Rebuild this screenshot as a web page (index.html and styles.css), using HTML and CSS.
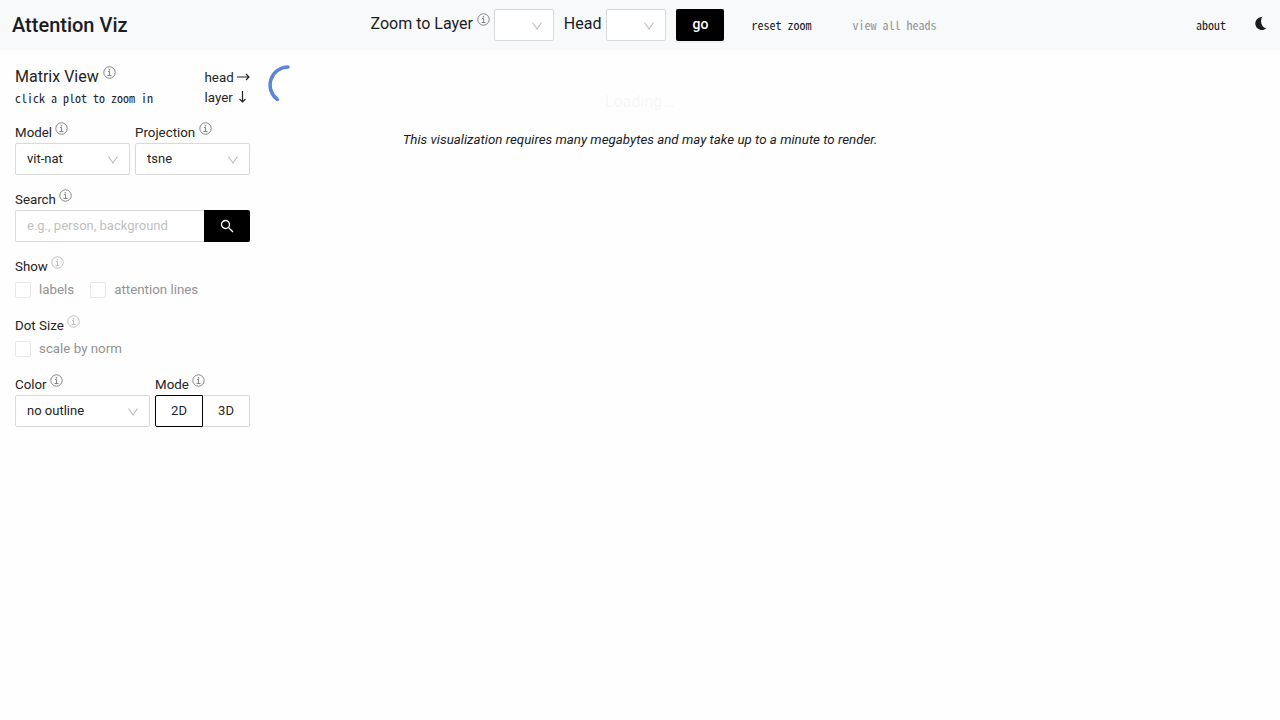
FILE: index.html
```
<!DOCTYPE html>
<html lang="en">
<head>
<meta charset="utf-8">
<title>Attention Viz</title>
<link rel="stylesheet" href="styles.css">
</head>
<body>
<svg class="sprite" aria-hidden="true">
  <symbol id="info" viewBox="0 0 13 13"><g fill="none" stroke="currentColor" stroke-width=".9"><circle cx="6.5" cy="6.5" r="5.700"/><path d="M5 5.500h1.500v4M4.500 9.500h4"/></g><circle cx="6.4" cy="3.7" r=".8" fill="currentColor"/></symbol>
  <symbol id="down" viewBox="0 0 12 12"><path d="M1.5 2.5 6 9l4.500-6.500" fill="none" stroke="currentColor" stroke-width="1.200"/></symbol>
</svg>
<header class="topbar">
  <h1 class="brand">Attention Viz</h1>
  <div class="zoom">
    <label class="zoom-label" for="layer">Zoom to Layer <svg class="info"><use href="#info"/></svg></label>
    <span class="select small"><select id="layer"><option></option></select><svg><use href="#down"/></svg></span>
    <label class="zoom-label head-label" for="head">Head</label>
    <span class="select small"><select id="head"><option></option></select><svg><use href="#down"/></svg></span>
    <button class="go">go</button>
    <button class="text-button pixel">reset zoom</button>
    <button class="text-button pixel" disabled>view all heads</button>
  </div>
  <nav class="links">
    <a class="pixel" href="#about">about</a>
    <button class="theme" aria-label="Dark mode"><svg viewBox="0 0 14 16"><path d="M8 2A6.500 6.500 0 1 0 12.500 13C8.500 13.500 5.500 7 8 2Z" fill="currentColor"/></svg></button>
  </nav>
</header>
<div class="page">
  <aside class="sidebar">
    <div class="intro">
      <div>
        <h2 class="view-title">Matrix View <svg class="info"><use href="#info"/></svg></h2>
        <p class="pixel">click a plot to zoom in</p>
      </div>
      <div class="axes">
        <div>head <svg viewBox="0 0 13 12"><path d="M0 6h12M9 3l3 3-3 3" fill="none" stroke="currentColor" stroke-width="1.200"/></svg></div>
        <div>layer <svg viewBox="0 0 13 12"><path d="M6.500 0v11M3.500 8l3 3 3-3" fill="none" stroke="currentColor" stroke-width="1.200"/></svg></div>
      </div>
    </div>
    <div class="row">
      <div class="field">
        <label class="label" for="model">Model <svg class="info"><use href="#info"/></svg></label>
        <span class="select"><select id="model"><option>vit-nat</option></select><svg><use href="#down"/></svg></span>
      </div>
      <div class="field">
        <label class="label" for="projection">Projection <svg class="info"><use href="#info"/></svg></label>
        <span class="select"><select id="projection"><option>tsne</option></select><svg><use href="#down"/></svg></span>
      </div>
    </div>
    <div>
      <label class="label" for="search">Search <svg class="info"><use href="#info"/></svg></label>
      <div class="search">
        <input id="search" type="text" placeholder="e.g., person, background">
        <button aria-label="Search"><svg viewBox="0 0 14 14"><g fill="none" stroke="currentColor" stroke-width="1.300"><circle cx="5.500" cy="5.500" r="4"/><path d="m8.400 8.400 4.600 4.600"/></g></svg></button>
      </div>
    </div>
    <div>
      <div class="label">Show <svg class="info muted"><use href="#info"/></svg></div>
      <div class="checks">
        <label><input type="checkbox" disabled>labels</label>
        <label><input type="checkbox" disabled>attention lines</label>
      </div>
    </div>
    <div>
      <div class="label">Dot Size <svg class="info muted"><use href="#info"/></svg></div>
      <div class="checks">
        <label><input type="checkbox" disabled>scale by norm</label>
      </div>
    </div>
    <div class="row">
      <div class="field">
        <label class="label" for="color">Color <svg class="info"><use href="#info"/></svg></label>
        <span class="select"><select id="color"><option>no outline</option></select><svg><use href="#down"/></svg></span>
      </div>
      <div class="mode">
        <div class="label">Mode <svg class="info"><use href="#info"/></svg></div>
        <div class="modes">
          <label><input type="radio" name="mode" checked>2D</label>
          <label><input type="radio" name="mode">3D</label>
        </div>
      </div>
    </div>
  </aside>
  <main class="plot">
    <svg class="spinner" viewBox="0 0 40 40" aria-hidden="true"><path d="M20 2A18 18 0 0 0 9.300 34.400" fill="none" stroke="#5b85d6" stroke-width="3.500" stroke-linecap="round"/></svg>
  </main>
  <div class="loading" role="status">
    <p class="loading-title">Loading...</p>
    <p class="loading-note">This visualization requires many megabytes and may take up to a minute to render.</p>
  </div>
</div>
</body>
</html>
```
FILE: styles.css
```
* { box-sizing: border-box; }
body { margin: 0; background: #fefefe; color: #1b1c1f; font: 16px/22px Roboto, sans-serif; }
h1, h2, p { margin: 0; font-weight: 400; }
button, input, select { margin: 0; font: inherit; color: inherit; }
button { border: 0; padding: 0; background: none; cursor: pointer; }
svg { flex: none; }
.sprite { position: absolute; width: 0; height: 0; }
.pixel { font: 12px/20px "Noto Sans Mono CJK SC", "Noto Sans Mono CJK JP", monospace; }

.topbar { display: grid; grid-template-columns: 1fr auto 1fr; align-items: center; height: 50px; padding: 0 12px; background: #f7f9fb; }
.brand { font-size: 20px; font-weight: 500; }
.zoom { display: flex; align-items: center; padding-left: 42px; }
.zoom-label { margin-right: 4px; padding-bottom: 3px; }
.head-label { margin: 0 5px 0 10px; }
.go { width: 48px; height: 32px; margin: 0 12px 0 10px; padding-bottom: 2px; border-radius: 2px; background: #000; color: #fff; font-size: 14px; font-weight: 500; box-shadow: 0 2px 0 #eff0f2; }
.text-button { padding: 0 15px; margin-right: 11px; }
.text-button:last-child { margin-right: 0; }
.text-button:disabled { color: #929396; }
.links { display: flex; align-items: center; justify-content: flex-end; gap: 28px; }
.links a { color: inherit; text-decoration: none; }
.theme { display: flex; padding-bottom: 4px; }
.theme svg { width: 14px; height: 16px; }

.info { width: 13px; height: 13px; color: #77787a; vertical-align: 2px; }
.zoom-label .info { vertical-align: 3px; }
.muted { color: #b7b8b9; }
.select { position: relative; display: block; }
.select.small { width: 60px; }
.select select { display: block; width: 100%; height: 32px; padding: 0 30px 0 11px; border: 1px solid #d9d9d9; border-radius: 2px; background: #fff; font-size: 13px; appearance: none; }
.select svg { position: absolute; right: 11px; top: 11px; width: 12px; height: 12px; color: #bfbfbf; pointer-events: none; }

.page { position: relative; display: flex; }
.sidebar { display: flex; flex-direction: column; gap: 13px; width: 265px; padding: 15px; color: #242424; }
.intro { display: flex; justify-content: space-between; height: 43px; }
.view-title { font-size: 16px; line-height: 24px; height: 23px; }
.view-title .info { vertical-align: 3px; }
.axes { padding-top: 3px; font-size: smaller; line-height: 20px; }
.axes svg { width: 13px; height: 12px; vertical-align: -1px; }
.row { display: flex; gap: 5px; }
.field { flex: 1; }
.label { display: block; height: 22px; font-size: smaller; line-height: 24px; white-space: nowrap; }
.search { display: flex; }
.search input { flex: 1; min-width: 0; height: 32px; padding: 0 11px 2px; border: 1px solid #d9d9d9; border-right: 0; border-radius: 2px 0 0 2px; background: #fff; font-size: 13px; }
.search input::placeholder { color: #bfbfbf; opacity: 1; }
.search button { display: flex; align-items: center; justify-content: center; width: 46px; height: 32px; border-radius: 0 2px 2px 0; background: #000; color: #fff; }
.search svg { width: 14px; height: 14px; }
.checks { display: flex; gap: 16px; height: 24px; padding-top: 2px; font-size: smaller; color: #929292; }
.checks label { display: flex; align-items: center; gap: 8px; }
.checks input { width: 16px; height: 16px; border: 1px solid #e8e8e8; border-radius: 2px; background: #fff; appearance: none; }
.mode { width: 95px; }
.modes { display: flex; font-size: 13px; }
.modes label { flex: 1; height: 32px; border: 1px solid #d9d9d9; border-left: 0; border-radius: 0 2px 2px 0; background: #fff; line-height: 30px; text-align: center; }
.modes label:has(:checked) { border: 1px solid #000; border-radius: 2px 0 0 2px; }
.modes input { position: absolute; opacity: 0; pointer-events: none; }

.plot { flex: 1; padding: 15px 3px; }
.spinner { display: block; width: 40px; height: 40px; }
.loading { position: absolute; top: 41px; left: 0; right: 0; text-align: center; pointer-events: none; }
.loading-title { margin-bottom: 16px; color: #f7f7f7; }
.loading-note { font-size: smaller; font-style: italic; }
```
